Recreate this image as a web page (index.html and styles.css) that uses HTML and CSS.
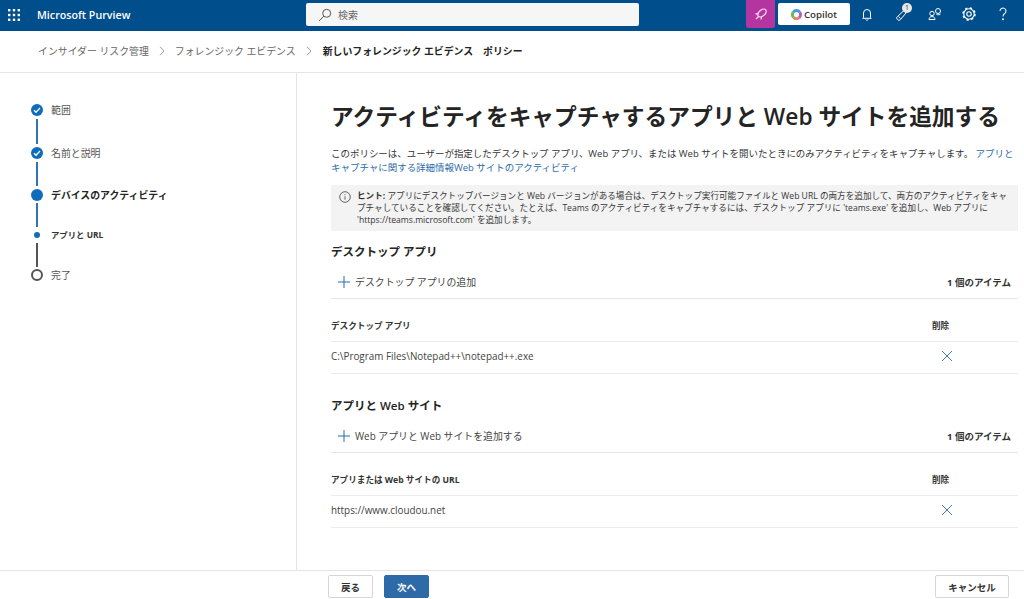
FILE: index.html
```html
<!DOCTYPE html>
<html lang="ja">
<head>
<meta charset="utf-8">
<title>Microsoft Purview</title>
<link rel="stylesheet" href="styles.css">
</head>
<body>
<header class="topbar">
  <div class="brand">
    <svg class="waffle" width="12" height="12" viewBox="0 0 12 12"><g fill="#fff"><rect x="0" y="0" width="2.4" height="2.4"/><rect x="4.8" y="0" width="2.4" height="2.4"/><rect x="9.6" y="0" width="2.4" height="2.4"/><rect x="0" y="4.8" width="2.4" height="2.4"/><rect x="4.8" y="4.8" width="2.4" height="2.4"/><rect x="9.6" y="4.8" width="2.4" height="2.4"/><rect x="0" y="9.6" width="2.4" height="2.4"/><rect x="4.8" y="9.6" width="2.4" height="2.4"/><rect x="9.6" y="9.6" width="2.4" height="2.4"/></g></svg>
    <span class="brand-name">Microsoft Purview</span>
  </div>
  <div class="search">
    <svg width="14" height="14" viewBox="0 0 14 14" fill="none" stroke="#555" stroke-width="1"><circle cx="8.7" cy="5.3" r="4"/><path d="M5.8 8.2 1 13"/></svg>
    <span>検索</span>
  </div>
  <div class="actions">
    <div class="magenta">
      <svg width="14" height="14" viewBox="0 0 14 14" fill="none" stroke="#f5d5ef" stroke-width="1.300"><ellipse cx="8" cy="6" rx="4.800" ry="3" transform="rotate(-40 8 6)"/><path d="M4.500 6.500 1.500 7M7.500 9.500 7 12.500M4.800 9.200 2 12"/></svg>
    </div>
    <div class="copilot">
      <svg width="11" height="11" viewBox="0 0 12 12" fill="none" stroke-width="3.200"><path d="M2.500 3.500A4.300 4.300 0 0 1 9.500 3.500" stroke="#3f9be8"/><path d="M9.500 3.500A4.300 4.300 0 0 1 8.500 9.700" stroke="#b05fc8"/><path d="M8.500 9.700A4.300 4.300 0 0 1 3 9.200" stroke="#ef7d5a"/><path d="M3 9.200A4.300 4.300 0 0 1 2.500 3.500" stroke="#6fb85a"/></svg>
      <span>Copilot</span>
    </div>
    <div class="icons">
      <svg class="tool" width="16" height="16" viewBox="0 0 16 16" fill="none" stroke="#fff"><path d="M4.500 11.500V7a3.500 3.500 0 0 1 7 0v4.500l.8.8H3.700Z"/><path d="M6.800 13.500a1.300 1.300 0 0 0 2.400 0"/></svg>
      <div class="note">
        <svg class="tool" width="16" height="16" viewBox="0 0 16 16" fill="none" stroke="#fff"><path d="M4.500 10.500 11 4.500l2 2.500-5.500 6.500a1.800 1.800 0 0 1-2.800.2l-.7-.7a1.800 1.800 0 0 1 .5-2.500Z"/><path d="M5.500 10.500 7.500 12.500"/></svg>
        <span class="badge">1</span>
      </div>
      <svg class="tool" width="16" height="16" viewBox="0 0 16 16" fill="none" stroke="#fff"><circle cx="11" cy="5" r="2.500"/><circle cx="5" cy="7.500" r="2.200"/><path d="M2 13.500c0-1.800 1.300-3 3-3s3 1.200 3 3Z"/><path d="M9.500 8.500c1.500.6 3.500.2 4-.6"/></svg>
      <svg class="tool" width="16" height="16" viewBox="0 0 16 16" fill="none" stroke="#fff" stroke-width="1.100"><circle cx="8" cy="8" r="2.200"/><circle cx="8" cy="8" r="5.200"/><circle cx="8" cy="8" r="6" stroke-width="1.500" stroke-dasharray="2.300 2.412"/></svg>
      <svg class="tool" width="16" height="16" viewBox="0 0 16 16" fill="none" stroke="#fff" stroke-width="1.100"><path d="M5 5a3 3 0 1 1 4.700 2.500C8.500 8.300 8 9 8 10.500"/><circle cx="8" cy="13.300" r=".4" fill="#fff"/></svg>
    </div>
  </div>
</header>

<nav class="crumbs">
  <span>インサイダー リスク管理</span>
  <svg class="chev" width="8" height="10" viewBox="0 0 8 10" fill="none" stroke="#999"><path d="m2 .8 4 4.200-4 4.200"/></svg>
  <span>フォレンジック エビデンス</span>
  <svg class="chev" width="8" height="10" viewBox="0 0 8 10" fill="none" stroke="#999"><path d="m2 .8 4 4.200-4 4.200"/></svg>
  <strong>新しいフォレンジック エビデンス　ポリシー</strong>
</nav>

<div class="body">
  <aside class="steps">
    <div class="step">
      <div class="rail">
        <span class="dot done"><svg width="8" height="8" viewBox="0 0 8 8" fill="none" stroke="#fff" stroke-width="1.300"><path d="m1 4.300 2 2 4-4.300"/></svg></span>
        <span class="line blue"></span>
      </div>
      <span class="label">範囲</span>
    </div>
    <div class="step">
      <div class="rail">
        <span class="dot done"><svg width="8" height="8" viewBox="0 0 8 8" fill="none" stroke="#fff" stroke-width="1.300"><path d="m1 4.300 2 2 4-4.300"/></svg></span>
        <span class="line blue"></span>
      </div>
      <span class="label">名前と説明</span>
    </div>
    <div class="step tight">
      <div class="rail">
        <span class="dot done"></span>
        <span class="line blue"></span>
      </div>
      <span class="label current">デバイスのアクティビティ</span>
    </div>
    <div class="step tight">
      <div class="rail">
        <span class="dot small"></span>
        <span class="line grey"></span>
      </div>
      <span class="label sub">アプリと URL</span>
    </div>
    <div class="step">
      <div class="rail">
        <span class="dot open"></span>
      </div>
      <span class="label">完了</span>
    </div>
  </aside>

  <main class="content">
    <h1>アクティビティをキャプチャするアプリと Web サイトを追加する</h1>
    <p class="intro">このポリシーは、ユーザーが指定したデスクトップ アプリ、Web アプリ、または Web サイトを開いたときにのみアクティビティをキャプチャします。 <a>アプリとキャプチャに関する詳細情報Web サイトのアクティビティ</a></p>
    <div class="hint">
      <svg width="12" height="12" viewBox="0 0 12 12" fill="none" stroke="#555" stroke-width=".9"><circle cx="6" cy="6" r="5.300"/><path d="M6 5.300v3.400M6 3.200v1"/></svg>
      <p><b>ヒント:</b> アプリにデスクトップバージョンと Web バージョンがある場合は、デスクトップ実行可能ファイルと Web URL の両方を追加して、両方のアクティビティをキャプチャしていることを確認してください。たとえば、Teams のアクティビティをキャプチャするには、デスクトップ アプリに 'teams.exe' を追加し、Web アプリに <span class="url">'https://teams.microsoft.com'</span> を追加します。</p>
    </div>

    <section class="group">
      <h2>デスクトップ アプリ</h2>
      <div class="toolbar">
        <svg width="12" height="12" viewBox="0 0 12 12" stroke="#2b6ca8" stroke-width="1"><path d="M6 0v12M0 6h12"/></svg>
        <span class="add">デスクトップ アプリの追加</span>
        <span class="count">1 個のアイテム</span>
      </div>
      <div class="row head">
        <span class="cell">デスクトップ アプリ</span>
        <span class="del">削除</span>
      </div>
      <div class="row item">
        <span class="cell">C:\Program Files\Notepad++\notepad++.exe</span>
        <span class="del"><svg width="10" height="10" viewBox="0 0 10 10" stroke="#2b6ca8" stroke-width=".9"><path d="m0 0 10 10M10 0 0 10"/></svg></span>
      </div>
    </section>

    <section class="group">
      <h2>アプリと Web サイト</h2>
      <div class="toolbar">
        <svg width="12" height="12" viewBox="0 0 12 12" stroke="#2b6ca8" stroke-width="1"><path d="M6 0v12M0 6h12"/></svg>
        <span class="add">Web アプリと Web サイトを追加する</span>
        <span class="count">1 個のアイテム</span>
      </div>
      <div class="row head">
        <span class="cell">アプリまたは Web サイトの URL</span>
        <span class="del">削除</span>
      </div>
      <div class="row item">
        <span class="cell">https://www.cloudou.net</span>
        <span class="del"><svg width="10" height="10" viewBox="0 0 10 10" stroke="#2b6ca8" stroke-width=".9"><path d="m0 0 10 10M10 0 0 10"/></svg></span>
      </div>
    </section>
  </main>
</div>

<footer class="footer">
  <button class="btn">戻る</button>
  <button class="btn primary">次へ</button>
  <button class="btn cancel">キャンセル</button>
</footer>
</body>
</html>
```
FILE: styles.css
```css
* { box-sizing: border-box; }
html, body { margin: 0; height: 599px; overflow: hidden; }
body {
  display: flex;
  flex-direction: column;
  background: #fff;
  color: #242424;
  font-family: "Open Sans", "Noto Sans CJK JP", sans-serif;
  font-size: 10px;
}
.topbar {
  height: 31px;
  flex: none;
  display: flex;
  align-items: flex-start;
  background: #004e8c;
  color: #fff;
}
.brand {
  width: 306px;
  height: 31px;
  display: flex;
  align-items: center;
  padding-left: 8px;
  padding-bottom: 1px;
  gap: 17px;
}
.brand-name { font-size: 10.700px; font-weight: 600; }
.search {
  width: 333px;
  height: 23px;
  margin-top: 3px;
  background: #f6f6f6;
  border-radius: 2px;
  display: flex;
  align-items: center;
  gap: 6px;
  padding-left: 12px;
  color: #666;
  font-size: 10px;
}
.actions {
  margin-left: 107px;
  display: flex;
  align-items: flex-start;
}
.magenta {
  width: 29px;
  height: 28px;
  background: #b4359f;
  border-radius: 0 0 2px 2px;
  display: flex;
  align-items: center;
  justify-content: center;
}
.copilot {
  width: 72px;
  height: 22px;
  margin: 3px 0 0 3px;
  background: #fff;
  border-radius: 2px;
  color: #333;
  display: flex;
  align-items: center;
  justify-content: center;
  gap: 2px;
  font-size: 9.700px;
  font-weight: 600;
}
.icons {
  margin: 6px 0 0 9px;
  display: flex;
  align-items: center;
  gap: 18px;
}
.tool { display: block; }
.note { position: relative; }
.badge {
  position: absolute;
  top: -3px;
  right: -3px;
  width: 10px;
  height: 10px;
  border-radius: 50%;
  background: #e8e8e8;
  color: #333;
  font-size: 7px;
  line-height: 10px;
  text-align: center;
}
.crumbs {
  height: 42px;
  flex: none;
  display: flex;
  align-items: center;
  padding-left: 38px;
  padding-bottom: 1px;
  border-bottom: 1px solid #e4e4e4;
  color: #666;
  font-size: 9.900px;
}
.crumbs strong { color: #242424; font-weight: 700; }
.chev { margin: 0 9px; }
.chev + span + .chev { margin-right: 10px; }
.body {
  flex: 1;
  min-height: 0;
  display: flex;
}
.steps {
  width: 297px;
  flex: none;
  border-right: 1px solid #e4e4e4;
  padding: 31px 0 0 31px;
}
.step {
  display: flex;
  gap: 8px;
  height: 42.500px;
}
.tight { height: 40px; }
.rail {
  width: 12px;
  display: flex;
  flex-direction: column;
  align-items: center;
}
.dot {
  width: 12px;
  height: 12px;
  flex: none;
  border-radius: 50%;
  display: flex;
  align-items: center;
  justify-content: center;
}
.done { background: #0f6cbd; }
.small { width: 6px; height: 6px; background: #0f6cbd; margin: 3px 0; }
.open { border: 2px solid #555; background: #fff; }
.line { width: 2px; flex: 1; margin: 3px 0; }
.tight .line { margin: 2px 0; }
.blue { background: #2f75b5; }
.grey { background: #555; }
.label { color: #555; font-size: 9.900px; line-height: 12px; }
.current { color: #242424; font-weight: 700; }
.sub { color: #333; font-size: 8.400px; font-weight: 700; }
.content {
  flex: 1;
  min-width: 0;
  padding: 28px 6px 0 34px;
}
h1 {
  margin: 0;
  font-size: 22.700px;
  line-height: 32px;
  font-weight: 600;
  color: #242424;
}
.intro {
  margin: 14px 0 0;
  font-size: 9.470px;
  line-height: 14px;
  color: #333;
}
.intro a { color: #2b6ca8; }
.hint {
  margin-top: 10px;
  background: #f3f3f3;
  padding: 5px 5px 5px 8px;
  display: flex;
  gap: 6px;
}
.hint svg { flex: none; margin-top: 1px; }
.hint p {
  margin: 0;
  font-size: 8.600px;
  line-height: 12px;
  color: #333;
}
.url { white-space: nowrap; }
.group { margin-top: 12px; }
.group + .group { margin-top: 23px; }
h2 {
  margin: 0;
  font-size: 11.500px;
  line-height: 18px;
  font-weight: 600;
}
.toolbar {
  height: 38px;
  display: flex;
  align-items: center;
  gap: 5px;
  padding: 4px 7px 0;
  border-bottom: 1px solid #e4e4e4;
  margin-bottom: 10px;
}
.add { flex: 1; font-size: 9.900px; color: #444; }
.count { font-size: 9.500px; font-weight: 700; color: #333; }
.row {
  display: flex;
  align-items: center;
  border-bottom: 1px solid #ececec;
}
.head { height: 33px; font-size: 8.600px; font-weight: 700; color: #333; }
.item { height: 32px; padding-bottom: 3px; font-size: 9.900px; color: #444; }
.cell { flex: 1; }
.del { width: 87px; text-align: left; display: block; padding-left: 1px; }
.del svg { display: block; margin-left: 10px; }
.footer {
  height: 29px;
  flex: none;
  border-top: 1px solid #e4e4e4;
  display: flex;
  align-items: flex-start;
  padding: 4px 15px 0 328px;
  gap: 11px;
}
.btn {
  height: 23px;
  width: 45px;
  background: #fff;
  border: 1px solid #d6d6d6;
  border-radius: 2px;
  padding: 0;
  font: 700 9.500px "Open Sans", "Noto Sans CJK JP", sans-serif;
  color: #333;
}
.primary { background: #2f6aa8; border-color: #2f6aa8; color: #fff; }
.cancel { width: 74px; margin-left: auto; }
```
